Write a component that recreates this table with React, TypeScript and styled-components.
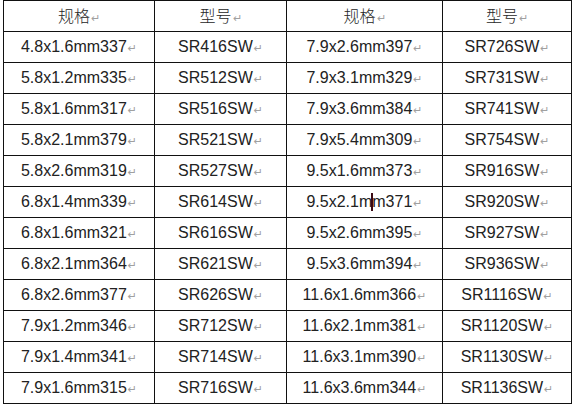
import styled, { createGlobalStyle } from "styled-components";

const rows: [string, string, string, string][] = [
  ["4.8x1.6mm337", "SR416SW", "7.9x2.6mm397", "SR726SW"],
  ["5.8x1.2mm335", "SR512SW", "7.9x3.1mm329", "SR731SW"],
  ["5.8x1.6mm317", "SR516SW", "7.9x3.6mm384", "SR741SW"],
  ["5.8x2.1mm379", "SR521SW", "7.9x5.4mm309", "SR754SW"],
  ["5.8x2.6mm319", "SR527SW", "9.5x1.6mm373", "SR916SW"],
  ["6.8x1.4mm339", "SR614SW", "9.5x2.1mm371", "SR920SW"],
  ["6.8x1.6mm321", "SR616SW", "9.5x2.6mm395", "SR927SW"],
  ["6.8x2.1mm364", "SR621SW", "9.5x3.6mm394", "SR936SW"],
  ["6.8x2.6mm377", "SR626SW", "11.6x1.6mm366", "SR1116SW"],
  ["7.9x1.2mm346", "SR712SW", "11.6x2.1mm381", "SR1120SW"],
  ["7.9x1.4mm341", "SR714SW", "11.6x3.1mm390", "SR1130SW"],
  ["7.9x1.6mm315", "SR716SW", "11.6x3.6mm344", "SR1136SW"],
];

const colWidths = [151, 132, 156, 129];

const GlobalStyle = createGlobalStyle`
  html, body {
    margin: 0;
    padding: 0;
    background: #ffffff;
    overflow: hidden;
  }
`;

const Page = styled.div`
  width: 573px;
  height: 407px;
  padding-left: 3px;
  box-sizing: border-box;
  background: #ffffff;
  overflow: hidden;
`;

const Table = styled.table`
  border-collapse: collapse;
  table-layout: fixed;
  width: 568px;
  font-family: "Liberation Sans", Arial, "Noto Sans CJK SC", sans-serif;
  font-size: 16px;
  color: #222222;
`;

const Row = styled.tr`
  height: 31px;
`;

const Cell = styled.td`
  border: 1px solid #111111;
  padding: 2px 0 0;
  text-align: center;
  vertical-align: middle;
  line-height: 18px;
  white-space: nowrap;
`;

const HeadCell = styled(Cell)`
  font-family: "Noto Sans CJK SC", "Liberation Sans", sans-serif;
  font-weight: 300;
  font-size: 16px;
  color: #262626;
`;

const ReturnMark = styled.span`
  font-family: "DejaVu Sans", sans-serif;
  font-size: 11px;
  color: #a0a0a0;
  margin-left: 1px;
`;

const Caret = styled.span`
  position: relative;
  display: inline-block;
  width: 0;

  &::after {
    content: "";
    position: absolute;
    left: -1px;
    top: -14px;
    width: 2px;
    height: 18px;
    background: #3a0a14;
  }
`;

function Text({ value }: { value: string }) {
  // caret sits inside the "mm" of one cell, as in the editor shot
  if (value === "9.5x2.1mm371") {
    return (
      <>
        9.5x2.1m
        <Caret />
        m371
        <ReturnMark>↵</ReturnMark>
      </>
    );
  }
  return (
    <>
      {value}
      <ReturnMark>↵</ReturnMark>
    </>
  );
}

export default function App() {
  return (
    <Page>
      <GlobalStyle />
      <Table>
        <colgroup>
          {colWidths.map((w, i) => (
            <col key={i} style={{ width: w }} />
          ))}
        </colgroup>
        <tbody>
          <Row>
            {["规格", "型号", "规格", "型号"].map((h, i) => (
              <HeadCell key={i}>
                {h}
                <ReturnMark>↵</ReturnMark>
              </HeadCell>
            ))}
          </Row>
          {rows.map((r) => (
            <Row key={r[0]}>
              {r.map((v, i) => (
                <Cell key={i}>
                  <Text value={v} />
                </Cell>
              ))}
            </Row>
          ))}
        </tbody>
      </Table>
    </Page>
  );
}
